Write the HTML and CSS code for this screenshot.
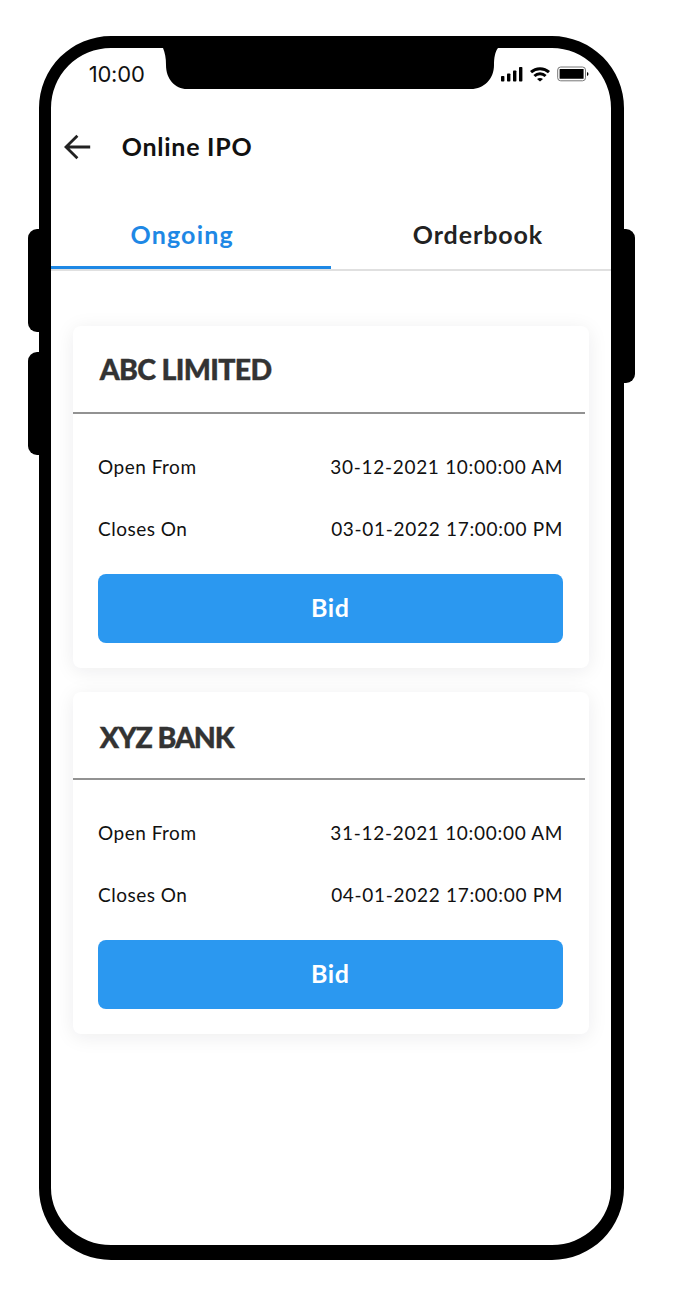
FILE: index.html
```html
<!DOCTYPE html>
<html lang="en">
<head>
    <meta charset="UTF-8">
    <meta name="viewport" content="width=device-width, initial-scale=1.0">
    <title>Online IPO</title>
    <link rel="stylesheet" href="styles.css">
</head>
<body>
    <div class="phone">
        <span class="side-button volume-up"></span>
        <span class="side-button volume-down"></span>
        <span class="side-button power"></span>
        <svg class="notch" width="336" height="42" viewBox="0 0 336 42">
            <path d="M0 0C2 5 3 10 3 17C3 31 12 41 24 41H308C321 41 331 31 331 17C331 10 332 4 335 0Z"/>
        </svg>

        <div class="status-bar">
            <span class="time">10:00</span>
            <div class="status-icons">
                <svg width="22" height="16" viewBox="0 0 22 16">
                    <rect x="0" y="10" width="3.4" height="5.5" rx="0.8"/>
                    <rect x="6" y="7.5" width="3.4" height="8" rx="0.8"/>
                    <rect x="12" y="4.5" width="3.4" height="11" rx="0.8"/>
                    <rect x="18" y="1" width="3.4" height="14.5" rx="0.8"/>
                </svg>
                <svg class="wifi" width="20" height="15" viewBox="0 0 20 15">
                    <path d="M1 5.2C6 .6 14 .6 19 5.2M4.4 9C7.5 6.1 12.5 6.1 15.6 9"/>
                    <path class="dot" d="M7 11.9C8.8 10.7 11.2 10.7 13 11.9L10 14.4Z"/>
                </svg>
                <svg class="battery" width="32" height="16" viewBox="0 0 32 16">
                    <rect class="shell" x="0.7" y="1" width="27.8" height="13.8" rx="3"/>
                    <rect x="2.6" y="3" width="24" height="9.8" rx="0.5"/>
                    <path d="M30 6C32 6.8 32 9.2 30 10Z"/>
                </svg>
            </div>
        </div>

        <div class="header">
            <svg width="27" height="26" viewBox="0 0 27 26">
                <path d="M13.4 1.8L2 13L13.4 24.2M2.2 13H26.2"/>
            </svg>
            <h1>Online IPO</h1>
        </div>

        <div class="tabs">
            <div class="tab active">Ongoing</div>
            <div class="tab">Orderbook</div>
        </div>

        <div class="cards">
            <div class="card">
                <h2 class="abc">ABC LIMITED</h2>
                <div class="details">
                    <div class="row"><span>Open From</span><span class="date">30-12-2021 10:00:00 AM</span></div>
                    <div class="row"><span>Closes On</span><span class="date">03-01-2022 17:00:00 PM</span></div>
                    <button>Bid</button>
                </div>
            </div>
            <div class="card">
                <h2 class="xyz">XYZ BANK</h2>
                <div class="details">
                    <div class="row"><span>Open From</span><span class="date">31-12-2021 10:00:00 AM</span></div>
                    <div class="row"><span>Closes On</span><span class="date">04-01-2022 17:00:00 PM</span></div>
                    <button>Bid</button>
                </div>
            </div>
        </div>
    </div>
</body>
</html>
```
FILE: styles.css
```css
* {
    box-sizing: border-box;
}

body {
    margin: 0;
    background-color: #fff;
    font-family: Lato, sans-serif;
    color: #111;
}

.phone {
    position: relative;
    width: 585.5px;
    height: 1224px;
    margin: 36px 0 0 38.7px;
    border: solid #000;
    border-width: 12px 13px 15px 12px;
    border-radius: 72px;
    background-color: #fff;
}

.side-button {
    position: absolute;
    left: -23px;
    width: 14px;
    height: 103px;
    background-color: #000;
    border-radius: 9px 0 0 9px;
}

.volume-up {
    top: 181px;
}

.volume-down {
    top: 304px;
}

.power {
    top: 181px;
    left: auto;
    right: -24px;
    height: 154px;
    border-radius: 0 9px 9px 0;
}

.notch {
    position: absolute;
    top: 0;
    left: 112px;
}

.status-bar {
    display: flex;
    justify-content: space-between;
    height: 52px;
    padding: 0 22px 0 38px;
    align-items: center;
}

.time {
    font-family: Inter, sans-serif;
    font-size: 22px;
    letter-spacing: -0.2px;
}

.status-icons {
    display: flex;
    align-items: center;
    gap: 7px;
}

.wifi {
    fill: none;
    stroke: #000;
    stroke-width: 3;
}

.wifi .dot {
    fill: #000;
    stroke: none;
}

.battery .shell {
    fill: none;
    stroke: #777;
    stroke-width: 1;
}

.header {
    display: flex;
    align-items: center;
    height: 94px;
    padding-left: 13px;
    gap: 31px;
}

.header svg {
    fill: none;
    stroke: #222;
    stroke-width: 2.8;
}

h1 {
    margin: -2px 0 0;
    font-size: 25px;
    font-weight: 700;
    letter-spacing: 0.75px;
}

.tabs {
    display: flex;
    height: 77px;
    border-bottom: 2px solid #e0e0e0;
}

.tab {
    flex: 1 1 0;
    height: 75px;
    padding-top: 25px;
    line-height: 30px;
    text-align: center;
    font-size: 25px;
    font-weight: 700;
    letter-spacing: 0.9px;
    padding-left: 14px;
    color: #222;
}

.tab.active {
    flex: 0 0 280px;
    padding-left: 0;
    padding-right: 17px;
    letter-spacing: 1.2px;
    color: #1e88e5;
    border-bottom: 3px solid #1e88e5;
}

.cards {
    display: flex;
    flex-direction: column;
    gap: 24px;
    padding: 55px 22.5px 0 22px;
}

.card {
    height: 342px;
    border-radius: 8px;
    background-color: #fff;
    box-shadow: 0 3px 20px rgba(20, 20, 40, 0.08);
}

h2 {
    height: 88px;
    margin: 0 4px 0 0;
    padding-left: 27px;
    border-bottom: 2px solid #929292;
    font-size: 28.5px;
    font-weight: 900;
    line-height: 87px;
    color: #333;
    -webkit-text-stroke: 0.4px #333;
}

.abc {
    letter-spacing: -0.65px;
}

.xyz {
    line-height: 91px;
    letter-spacing: -1.1px;
}

.details {
    padding: 22px 25.3px 0 25.3px;
}

.row {
    display: flex;
    justify-content: space-between;
    height: 62px;
    line-height: 62px;
    font-size: 19px;
    letter-spacing: 0.7px;
}

.row span:first-child {
    letter-spacing: 0.5px;
}

.date {
    margin-right: 0.2px;
}

button {
    display: block;
    width: 100%;
    height: 69px;
    margin-top: 14px;
    padding: 0 1px 3px 0;
    border: none;
    border-radius: 8px;
    background-color: #2b98f0;
    color: #fff;
    font-family: Lato, sans-serif;
    font-size: 25px;
    font-weight: 700;
    letter-spacing: 0.6px;
}
```
